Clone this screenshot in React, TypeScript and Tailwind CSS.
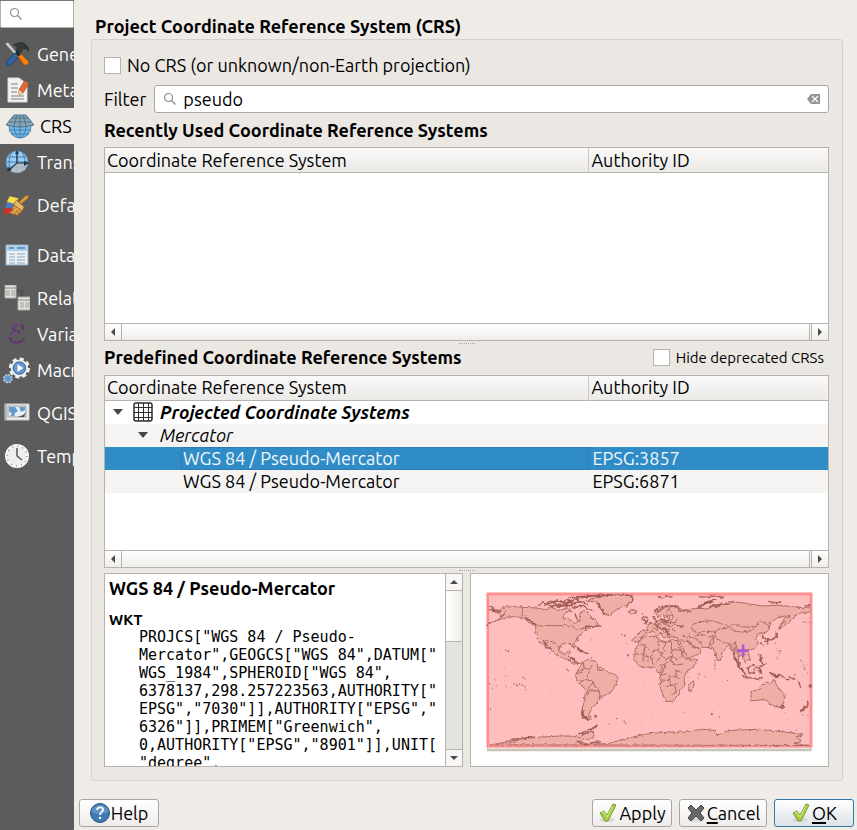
import type { ReactNode } from 'react';

const ToolsIcon = () => (
  <svg viewBox="0 0 26 26" className="size-[26px]">
    <path d="M1 2l3-1 10 12-2 2L2 4z" fill="#c9ccce" stroke="#444" strokeWidth=".6" />
    <path d="M3 20l8-8 4 3-8 9c-3 2-6-1-4-4z" fill="#2e63a5" stroke="#1d3764" strokeWidth=".8" />
    <path d="M10 4c6-4 13-3 15 6-3-3-5-3-7-1l-2 4-4-3 2-4z" fill="#343a3a" stroke="#1d2222" strokeWidth=".7" />
    <path d="M13 14l3-2 9 9-2 3-3 0z" fill="#f68012" stroke="#a94e09" strokeWidth=".8" />
    <path d="M11 12l3-2 3 4-3 1z" fill="#202a35" />
  </svg>
);

const MetadataIcon = () => (
  <svg viewBox="0 0 26 26" className="size-[26px]">
    <path d="M4 1h11l8 6v18H4z" fill="#f2f2f0" stroke="#d9d9d6" />
    <path d="M7 7h7M7 11h7M7 15h6M7 19h13M7 22h13" stroke="#a7a7a7" strokeWidth="1.3" />
    <path d="M21 3l4 3-6 10-4 2 0-5z" fill="#e96832" stroke="#a23d16" strokeWidth=".7" />
    <path d="M15 13l4 3-4 2z" fill="#f7d4a5" />
    <path d="M21 3l5 3" stroke="#5a5f66" strokeWidth="1.5" />
  </svg>
);

const GlobeHatIcon = () => (
  <svg viewBox="0 0 28 26" className="h-[26px] w-7">
    <circle cx="14" cy="14" r="11" fill="#78b8e8" stroke="#3f7fae" strokeWidth=".8" />
    <path d="M14 13v12M8 13c0 5 2 9 5 12M20 13c0 5-2 9-5 12M3 17h22M5 21h18" fill="none" stroke="#3d78a8" strokeWidth=".9" />
    <path d="M8 2h12l8 10q-14 4-28 0z" fill="#87a5b4" stroke="#466c80" strokeWidth=".9" />
    <path d="M11 2L8 13M17 2l3 11M14 2v12M6 5h16M3 9h22" fill="none" stroke="#466c80" strokeWidth=".8" />
  </svg>
);

const TransformIcon = () => (
  <svg viewBox="0 0 26 26" className="size-[26px]">
    <circle cx="13" cy="13" r="11" fill="#9ccdf0" stroke="#4d8cbd" strokeWidth=".8" />
    <path d="M2 13h22M4 8h18M4 18h18M13 2v22M8 3c-4 7-4 13 0 20M18 3c4 7 4 13 0 20" fill="none" stroke="#3d7fb5" strokeWidth="1" />
    <path d="M5 22l8-8 11 0-3 7-7 3z" fill="#b8bcc0" opacity=".85" />
    <path d="M13 3v11l-8 7M13 14h11" fill="none" stroke="#233746" strokeWidth="1.2" />
    <path d="M11 5l2-4 2 4zM20 12l5 2-5 3zM4 18l-1 5 5-2z" fill="#233746" />
  </svg>
);

const BrushIcon = () => (
  <svg viewBox="0 0 28 26" className="h-[26px] w-7">
    <path d="M7 4l9 2-3 7-9-3z" fill="#f6dc4b" />
    <path d="M4 10l9 2-2 5-9-1z" fill="#4b79b8" />
    <path d="M2 16l10 1 3 5-15 0z" fill="#d82c2c" />
    <path d="M24 3l3 0-1 3-7 6-3-2z" fill="#d89b3d" stroke="#89591c" strokeWidth=".8" />
    <path d="M14 8l8 7-2 4-9-6z" fill="#e9ba66" stroke="#89591c" strokeWidth=".7" />
    <path d="M11 13l9 6-5 5-9-3c3-1 4-4 5-8z" fill="#e0a552" stroke="#8f5a1d" strokeWidth=".7" />
    <path d="M12 16l-3 5M15 18l-3 5M17 19l-2 4" stroke="#8f5a1d" strokeWidth=".8" />
  </svg>
);

const TableIcon = () => (
  <svg viewBox="0 0 26 26" className="size-[26px]">
    <rect x="2" y="3" width="22" height="20" fill="#edf1f3" stroke="#83a8c8" />
    <rect x="3" y="4" width="20" height="5" fill="#a9cdeb" />
    <path d="M5 6h5M13 6h8" stroke="#5886b0" strokeWidth="1.4" />
    <path d="M5 12h6M13 12h8M5 15h6M13 15h8M5 18h6M13 18h8M5 21h6M13 21h8" stroke="#8ba6c2" strokeWidth="1.2" />
  </svg>
);

const RelationsIcon = () => (
  <svg viewBox="0 0 26 26" className="size-[26px]">
    <path d="M13 6h5v8" fill="none" stroke="#35485c" strokeWidth="1.2" />
    <path d="M1 0h11v13H1zM14 12h12v13H14z" fill="#e4e4df" stroke="#a9a9a5" />
    <path d="M1 3h11M14 15h12" stroke="#a4a4a0" strokeWidth="1.5" />
    <path d="M2 6h4M7 6h4M2 8h4M7 8h4M2 10h4M7 10h4M16 18h4M21 18h4M16 20h4M21 20h4M16 22h4M21 22h4" stroke="#999" />
  </svg>
);

const EpsilonIcon = () => (
  <svg viewBox="0 0 26 26" className="size-[26px]">
    <path d="M19 7c0-5-10-5-10-1 0 3 3 5 7 5-6 0-10 2-10 6 0 6 10 6 14 1" fill="none" stroke="#60396c" strokeWidth="2.500" strokeLinecap="round" />
    <path d="M8 6c1-4 7-4 9-2M6 16c1-3 4-4 7-5" fill="none" stroke="#9570a0" strokeWidth=".7" />
    <circle cx="19" cy="7" r="2" fill="#60396c" />
  </svg>
);

const GearIcon = () => (
  <svg viewBox="0 0 28 28" className="size-7">
    <circle cx="17" cy="12" r="9" fill="#eeeeec" />
    <circle cx="17" cy="12" r="9" fill="none" stroke="#eeeeec" strokeWidth="4" strokeDasharray="4 3.070" />
    <circle cx="17" cy="12" r="6.500" fill="#6297d2" stroke="#315f97" />
    <path d="M15 8l6 4-6 4z" fill="#fff" />
    <circle cx="5" cy="23" r="4" fill="#6297d2" stroke="#b9cbdc" strokeWidth="2" strokeDasharray="2 1.140" />
  </svg>
);

const ServerIcon = () => (
  <svg viewBox="0 0 26 26" className="size-[26px]">
    <rect x="1" y="4" width="24" height="16" fill="#f0f1ee" stroke="#c7c9c4" />
    <rect x="4" y="6" width="18" height="11" fill="#e8eff4" stroke="#858985" strokeWidth=".8" />
    <path d="M5 7h6l3 4-3 2-1 3-5-5zM15 7h6v3l-4 2zM8 14l3 2H6z" fill="#6399cb" />
    <path d="M22 12l-2 5h-6l5-2z" fill="#46555e" />
    <path d="M2 4v16" stroke="#a3a5a2" strokeWidth="1.500" />
  </svg>
);

const ClockIcon = () => (
  <svg viewBox="0 0 26 26" className="size-[26px]">
    <circle cx="13" cy="13" r="11" fill="#eeeeec" stroke="#fafafa" strokeWidth="2" />
    <circle cx="13" cy="13" r="10" fill="none" stroke="#6e8fb8" strokeWidth="1.500" strokeDasharray="1 4.240" />
    <path d="M13 5v8l5 4" fill="none" stroke="#555" strokeWidth="1.500" />
  </svg>
);

const SearchIcon = () => (
  <svg viewBox="0 0 14 14" className="size-[14px] shrink-0" fill="none" stroke="#8e8e8e">
    <circle cx="5.500" cy="5.500" r="4" strokeWidth="1.200" />
    <path d="M8.500 8.500l4 4" strokeWidth="1.500" />
  </svg>
);

type NavItem = { label: string; icon: ReactNode; height: string; active?: boolean };

const navItems: NavItem[] = [
  { label: 'General', icon: <ToolsIcon />, height: 'h-9' },
  { label: 'Metadata', icon: <MetadataIcon />, height: 'h-9' },
  { label: 'CRS', icon: <GlobeHatIcon />, height: 'h-9', active: true },
  { label: 'Transformations', icon: <TransformIcon />, height: 'h-9' },
  { label: 'Default Styles', icon: <BrushIcon />, height: 'h-[50px]' },
  { label: 'Data Sources', icon: <TableIcon />, height: 'h-[50px]' },
  { label: 'Relations', icon: <RelationsIcon />, height: 'h-9' },
  { label: 'Variables', icon: <EpsilonIcon />, height: 'h-9' },
  { label: 'Macros', icon: <GearIcon />, height: 'h-9' },
  { label: 'QGIS Server', icon: <ServerIcon />, height: 'h-[50px]' },
  { label: 'Temporal', icon: <ClockIcon />, height: 'h-9' },
];

function Sidebar() {
  return (
    <aside className="w-[74px] shrink-0 overflow-hidden bg-[#5c5c5c]">
      <label className="mb-2 flex h-7 items-center rounded-[2px] border border-[#b4b0ac] border-t-[#777] bg-white pl-2">
        <SearchIcon />
        <input type="search" aria-label="Search settings" className="w-full min-w-0 bg-transparent outline-none" />
      </label>
      <nav>
        {navItems.map((item) => (
          <a
            key={item.label}
            href="#"
            className={
              item.active
                ? `flex items-center gap-[6px] bg-[#efebe7] pl-[6px] text-black ${item.height}`
                : `flex items-center gap-[7px] pl-[3px] text-white ${item.height}`
            }
          >
            <span className={item.active ? 'flex w-7 shrink-0 justify-center' : 'flex w-[27px] shrink-0 justify-center'}>{item.icon}</span>
            <span className="min-w-0 overflow-hidden whitespace-nowrap">{item.label}</span>
          </a>
        ))}
      </nav>
    </aside>
  );
}

function Arrow({ dir }: { dir: 'left' | 'right' | 'up' | 'down' }) {
  const paths = { left: 'M7 1v8L3 5z', right: 'M3 1v8l4-4z', up: 'M1 7h8L5 3z', down: 'M1 3h8L5 7z' };
  return (
    <svg viewBox="0 0 10 10" className="size-[10px]">
      <path d={paths[dir]} fill="#4b4b4b" />
    </svg>
  );
}

function HorizontalScrollbar() {
  return (
    <div className="flex h-[17px] shrink-0 border-t border-[#b6b2ae] bg-linear-to-b from-white to-[#efedea]">
      <button aria-label="Scroll left" className="flex w-[17px] items-center justify-center border-r border-[#b6b2ae]">
        <Arrow dir="left" />
      </button>
      <div className="mr-px flex-1 border-r border-[#b6b2ae]" />
      <button aria-label="Scroll right" className="flex w-[17px] items-center justify-center border-l border-[#b6b2ae]">
        <Arrow dir="right" />
      </button>
    </div>
  );
}

function CrsTable({ label, children }: { label: string; children?: ReactNode }) {
  return (
    <div className="flex min-h-[140px] flex-1 basis-0">
      <div className="flex min-w-0 flex-1 flex-col border border-[#b6b2ae] bg-white">
        <div className="flex-1">
          <table aria-label={label} className="w-full table-fixed border-separate border-spacing-0 text-left">
            <thead>
              <tr className="bg-linear-to-b from-[#fbf9f8] to-[#ebe9e6]">
                <th className="h-[25px] w-[67%] border-r border-b border-[#b6b2ae] border-r-[#cbc8c5] px-[2px] py-0 font-normal">
                  Coordinate Reference System
                </th>
                <th className="h-[25px] border-b border-[#b6b2ae] px-[2px] py-0 font-normal">Authority ID</th>
              </tr>
            </thead>
            <tbody>{children}</tbody>
          </table>
        </div>
        <HorizontalScrollbar />
      </div>
    </div>
  );
}

const Caret = () => (
  <svg viewBox="0 0 10 6" className="h-[6px] w-[10px] shrink-0">
    <path d="M0 0h10L5 6z" fill="#464646" />
  </svg>
);

const GridIcon = () => (
  <svg viewBox="0 0 20 20" className="size-5 shrink-0" fill="none" stroke="#2d2d2d">
    <rect x="1" y="1" width="18" height="18" rx="2" fill="#fff" strokeWidth="1.500" />
    <path d="M5.500 1v18M10.500 1v18M15.500 1v18M1 5.500h18M1 10.500h18M1 15.500h18" strokeWidth="1" />
  </svg>
);

const Grip = () => <div className="w-4 self-center border-t border-dotted border-[#aaa6a2]" />;

const specks: [number, number, number][] = [
  [58, 198, 2], [76, 225, 2], [92, 210, 4], [100, 214, 5], [88, 262, 2], [92, 288, 3], [145, 293, 4], [150, 297, 3],
  [60, 300, 3], [64, 318, 3], [52, 325, 3], [44, 312, 4], [88, 303, 2], [94, 320, 3], [118, 312, 4], [126, 316, 5],
  [134, 312, 4], [142, 316, 4], [150, 320, 4], [152, 330, 3], [130, 330, 2], [108, 322, 2], [228, 343, 2], [46, 388, 4],
  [225, 218, 3], [276, 268, 4], [280, 272, 4], [362, 409, 8], [425, 416, 4], [402, 432, 3], [448, 424, 4], [452, 430, 4],
  [349, 180, 3], [441, 164, 4], [450, 167, 5], [457, 192, 3], [459, 226, 6], [438, 268, 2], [491, 290, 2], [466, 352, 2],
  [495, 378, 2], [508, 316, 2], [503, 102, 4], [472, 148, 2], [350, 234, 4], [358, 243, 3], [443, 245, 2],
  [626, 397, 3], [664, 396, 2], [711, 403, 6], [734, 411, 4], [673, 282, 4], [670, 295, 3], [690, 290, 3], [720, 242, 3],
  [720, 255, 3], [723, 268, 2], [758, 302, 3], [672, 322, 2], [732, 374, 2], [640, 292, 3], [892, 180, 3], [902, 190, 3],
  [917, 213, 4], [910, 236, 3], [875, 250, 3], [935, 248, 2], [968, 250, 2], [978, 242, 3], [990, 268, 4], [998, 280, 3],
  [960, 285, 4], [974, 310, 5], [1007, 318, 10], [1000, 406, 3], [940, 420, 2], [965, 450, 3], [985, 405, 3], [930, 398, 2],
  [955, 270, 2], [999, 255, 2], [533, 416, 2], [498, 435, 2],
];

const countryLines =
  'M142 82V108M190 137H292L303 150 330 145 345 138M210 182L235 186 250 198 262 202M325 246L328 265 345 268 352 255M345 268L337 298 355 308 370 328 375 345M337 298L315 305M355 308L340 325 337 348 345 330 372 335M375 345L372 362M305 275L322 278 325 262M370 252L368 270 385 272 387 264' +
  'M480 223H508L510 196 528 216 550 210 552 182 570 188 590 184V210H622M496 195L510 198M508 228L530 232 540 212M550 210L560 226 545 248 535 255M570 188L568 215 560 226 572 238 590 228 592 210M592 230L608 238 622 228 636 236M590 228L588 247 604 256 625 252M555 258L570 252 588 247M560 258L558 284 575 282 587 292 604 290 602 270M558 284L556 300 582 302 590 318 610 310M575 320L592 315 605 322M602 270L620 280M587 292L583 302M604 290L618 296M570 255L566 272 552 280M600 318L604 335 590 345M505 228V245M518 230L520 245M530 232L534 250M622 228L620 212 636 222' +
  'M540 125L555 132 572 130 585 140 600 135 622 143M545 142L560 145 575 150 592 148M570 115L568 130M585 105L582 128 600 128 610 112M552 132L548 150M575 98L582 85 590 100M562 150L570 160M532 142L545 148M596 145L600 156M565 115L555 125' +
  'M650 135L676 125 715 122 736 130 760 137 755 146 735 146 720 156 690 154 670 160 652 150ZM760 138L780 132 800 140 832 142 844 137 830 152 800 157 775 152ZM844 137L858 124 878 132 885 147M720 156L722 172 742 186 775 194 780 186 790 210M715 168L716 190 696 204M660 168L685 164 702 172 716 168M640 158L645 176 660 174 676 184 682 198M622 168L640 172M616 180L635 183 650 194M780 200L788 222 800 215 812 224M722 172L710 178 700 196M770 194L768 208';

const coast =
  'M78 86l20-8 44 4 44 2 20 4 24-5 28 8 20-9 14 12-20 3-8 16 22 5 15 12 14-10 4-24 14-2 14 14 16 14 8 14-30 9-18 12-13 12-2 12-11 9-2 16-10-15-24 1-8 12 3 15 16 3 8-9 6 2-7 14 14 5 4 12 22 4-20 2-21-12-22-9-22-14-14-22-14-11 10 22-17-18-14-16-3-20 1-12-22-14-18-14-30-2-24 3-34 13-22 8 36-14 12-10-10-10Z' +
  'M334 62l34-12 50-6 58 3-6 22-28 12-24 12-15 15-15-7-9-20-17-15Z' +
  'M325 245l17-8 18 8 13 15 20 12 37 17-7 26-13 20-23 12-14 15-13 14-11 14-9 16 10 14-28-4-1-26 8-30 1-34-17-14-11-20 7-20Z' +
  'M495 175l20-5 33-2 5 12 18 5 20-5 24 4 6 12 14 30 10 15 24-5-15 26-20 14-7 20 4 20-16 15-4 16-18 17-20 1-10-24-8-24 4-26-12-16-9-14-30 2-16-6-14-20v-24l12-20Z' +
  'M644 312l14-10-1 18-11 16-5-10Z' +
  'M500 152h20l-4-11 16-10 12-6 16-7 16 4 16-6 2-10-16-2-8 10-8-12-12 10-8-14 14-14 26-8 24 4 14 8 20 2 22-5 38 1 18-11 34-5 32-4 38 5 38 7 52-2 48 5 46 3v12l-36 6-22 18-24 22-9 6 2-18 16-16 11-8-35 7-20 14-8 24-10 10-10-2-14 7-5 10 10 14-14 16-20 10 8 18-13 16-7-14-10-12-5 16 6 20 10 15-15-12-9-28-8-32-14-8-18 20-6 27-10-4-12-34-28-2-22 2-12-10-16-14 14 18 26 10 2 11-46 20-15-27-10-26-2-16-40 3-10-14-10 10-12-14-18 6-10 8-10 13-14 5-12-4Z' +
  'M830 336l26-12 18-18 14 6 8-14 12 22 24 26-5 22-14 14-26-8-14-17-26 4-20 2Z' +
  'M45 495l43-7 20-10 60-4 90-6 60 2 18-12 22-2-3 18-44 10 30 10 60-3 50-14 60-14 50-5 65-2 60-8 38 5 2 12 40-13 90-4 70 8 58 8-20 9 20 10-25 8 45 6Z';

const islands =
  'M190 76l14-8 8 4 14-8 12 6 10-8 16 6 10-8 12 4 14-8 20 10 18 8M205 78l12-6 14 8 12-8 14 8 14-6 16 4 14-10 16-2M212 72l28 8 26-6 20-12 24-8 40-5 60-4M225 66l28-4 20 8 24-4M240 74l30 4 24-2M290 86l12-8 13 2 10-4 16 12 12 4M300 100l4 12 6 10M330 144l12-6 13 4 8-6 16 4' +
  'M280 54l30-4 30-2 60-4 64 2M468 46l4 10-6 12-12 12M365 66l8 12 8 14 8 12M372 76l10 12' +
  'M38 78l14 6 8 6 14 2M40 90l16 0 10 8 10-4M76 112l10-8 6-8M150 110l10 10 10 4 10 8M156 112l16 16 14 8M205 184l8 8 4 10 8 4M210 190l10 14M300 196l8 4 4 10 12 2 8 8 10-2M304 204l12 8 16 6M285 236l8 2 8 8M290 232l10 8' +
  'M322 384l-2 16 6 12 14 6M324 392l2 18 14 4M328 405l12 12M310 462l18-5 10-6 12-4 18-12M316 464l20-4 20-4M345 452l22-14M305 484l20 10 20 0 10-6 24-2M140 474l40-2' +
  'M500 118l6-8 8 2 4 12-10 8M504 114l10 12M518 133l10-3M533 108l8 8 6 10M535 96l8-6 10-10 12-2M556 116l16 8 14-4M562 142l10 6 6 12 12 4M568 144l14 12M572 150l8 18M548 98l10-8 14-10 36-2M598 135l26 6M556 130l12-6 18 8M540 130l12 12 10 4M576 110l14 8' +
  'M550 50l12 4 14-6 18 4M675 50l20 2 12-4 28 2 14 6M670 80l14-10 16-6 25-4M672 84l22-14 20-4M705 84l10-10 14 4 18-8 16 2M712 78l14 4 14-10M600 76l10 8 6 10 14-2 20 4M880 64l20 4 20-2M990 78l18-1' +
  'M768 206l10 14 0 14 10 16 8 14M774 216l8 20 10 16M782 246l12 12 8 12 12 16M790 256l14 16 10 14M802 286l14 8 18 0 12 4 18-4M820 266l10-12 14 8-8 18-14-2ZM848 262l12-4-10 12 10 10-4-14M852 224l10 8-4 14 10 6-8 8M856 228l4 24M880 278l14 2 10 8 14-2 14 10 12 4M884 282l18 8 14 0M942 290l20 10M970 300l4 12 4 12M905 155l-1 12-8 10-16 6-12 2M904 150l4 18-14 10M862 162l4 12 12 4 2 14M856 188l10 10M998 362l2 14-10 10-14 10M994 376l-16 16M916 378l10-2-4 8ZM940 116l8-12M912 146l6-12 12-10';

function WorldMap() {
  return (
    <svg viewBox="0 0 1048 540" className="w-full max-w-[400px]" role="img" aria-label="Extent of the selected CRS">
      <filter id="rough">
        <feTurbulence type="fractalNoise" baseFrequency=".09" numOctaves="2" seed="4" />
        <feDisplacementMap in="SourceGraphic" scale="11" xChannelSelector="R" yChannelSelector="G" />
      </filter>
      <path d="M36 500H1011V514H36Z" fill="#c9c4ba" />
      <path d="M38 503H1003V507H38Z" fill="#f6ead9" />
      <rect x="34" y="37" width="980" height="467" rx="3" fill="#ffacac" />
      <rect x="39" y="43" width="969" height="455" fill="#ffbebe" stroke="#ff8b8b" strokeWidth="6" />
      <g filter="url(#rough)" fill="none" stroke="#ac6c64" strokeWidth="3" strokeLinejoin="round">
        <path d={coast} fill="#efaea6" />
        <path d={countryLines} />
        <path d={islands} stroke="#a35d56" strokeWidth="4" />
        <path d="M461 92l15-2 12 4-8 5-17-1ZM90 486l25-8 30 0M100 490l30-10" strokeWidth="4" />
        <path d="M720 240v34M905 205q16 16 0 30M980 240l12 24M985 127h25" strokeDasharray="3 5" />
      </g>
      {specks.map(([x, y, size]) => (
        <rect key={`${x}-${y}`} x={x - size / 2} y={y - size / 2} width={size} height={size} fill="#ad6660" />
      ))}
      <path d="M805 194v36M787 212h36" stroke="#b457d3" strokeWidth="8" />
    </svg>
  );
}

const CheckIcon = () => (
  <svg viewBox="0 0 20 20" className="size-5 shrink-0">
    <ellipse cx="9" cy="17" rx="8" ry="2" fill="#d8d7d5" />
    <path d="M2 10l4-2 3 4 6-11 3 1-8 16H7z" fill="#a5cf3d" stroke="#668b28" strokeWidth=".8" />
    <path d="M4 10l2-1 3 5 6-11" fill="none" stroke="#dcef8b" strokeWidth="1" />
  </svg>
);

const CrossIcon = () => (
  <svg viewBox="0 0 20 20" className="size-5 shrink-0">
    <ellipse cx="10" cy="17" rx="8" ry="2" fill="#d8d7d5" />
    <path d="M5 2l5 5 5-5 3 3-4 5 4 5-3 3-5-5-5 5-3-3 4-5-4-5z" fill="#666a68" stroke="#434644" strokeWidth="1" />
  </svg>
);

const HelpIcon = () => (
  <svg viewBox="0 0 20 20" className="size-5 shrink-0">
    <circle cx="10" cy="10" r="9.500" fill="#3f7ab4" stroke="#285985" />
    <path d="M2 9a8 7 0 0 1 16 0q-8 4-16 0z" fill="#78a6d0" opacity=".6" />
    <path d="M7 7c0-4 7-3 6 0-.5 2-3 2-3 5" fill="none" stroke="#fff" strokeWidth="1.800" />
    <circle cx="10" cy="15" r="1.200" fill="#fff" />
  </svg>
);

const buttonClass =
  'flex h-7 items-center justify-center gap-px rounded-[3px] border border-[#aaa6a2] bg-linear-to-b from-white to-[#efedeb]';

const wktLines = [
  'PROJCS["WGS 84 / Pseudo-',
  'Mercator",GEOGCS["WGS 84",DATUM["',
  'WGS_1984",SPHEROID["WGS 84",',
  '6378137,298.257223563,AUTHORITY["',
  'EPSG","7030"]],AUTHORITY["EPSG","',
  '6326"]],PRIMEM["Greenwich",',
  '0,AUTHORITY["EPSG","8901"]],UNIT[',
  '"degree",',
];

const checkboxClass = 'size-[17px] shrink-0 appearance-none border border-[#b6b2ae] bg-white checked:bg-[#308cc6]';

export default function App() {
  return (
    <div className="flex min-h-screen bg-[#efebe7] font-['Ubuntu','Noto_Sans',sans-serif] text-[18px] leading-[23px] text-black">
      <Sidebar />
      <main className="flex min-w-0 flex-1 flex-col">
        <h1 className="mt-[15px] mb-px pl-[21px] font-bold">Project Coordinate Reference System (CRS)</h1>
        <section className="mr-[14px] ml-[17px] flex flex-1 flex-col rounded-[3px] border border-[#d5d1cd] bg-[#ebe7e3] pt-[14px] pr-[13px] pb-[13px] pl-3">
          <label className="flex items-center gap-[6px]">
            <input type="checkbox" className={checkboxClass} />
            No CRS (or unknown/non-Earth projection)
          </label>
          <div className="mt-2 flex items-center gap-2">
            <label htmlFor="filter">Filter</label>
            <div className="flex h-7 flex-1 items-center gap-[6px] rounded-[3px] border border-[#aaa6a2] bg-white px-2">
              <SearchIcon />
              <input id="filter" type="text" defaultValue="pseudo" className="min-w-0 flex-1 bg-transparent outline-none" />
              <button aria-label="Clear filter">
                <svg viewBox="0 0 13 10" className="h-[10px] w-[13px]">
                  <path d="M4 0h9v10H4L0 5z" fill="#969492" />
                  <path d="M5 2l6 6M11 2l-6 6" stroke="#fff" strokeWidth="1.200" />
                </svg>
              </button>
            </div>
          </div>
          <h2 className="mt-[6px] mb-[5px] font-bold">Recently Used Coordinate Reference Systems</h2>
          <CrsTable label="Recently used coordinate reference systems" />
          <div className="mt-[2px] flex flex-col">
            <Grip />
          </div>
          <div className="mt-[2px] mb-[6px] flex items-center justify-between">
            <h2 className="font-bold">Predefined Coordinate Reference Systems</h2>
            <label className="flex items-center gap-[6px] pr-[5px] text-[15px]">
              <input type="checkbox" className={checkboxClass} />
              Hide deprecated CRSs
            </label>
          </div>
          <CrsTable label="Predefined coordinate reference systems">
            <tr className="h-[23px]">
              <td colSpan={2} className="p-0">
                <div className="flex items-center pl-2 font-bold italic">
                  <Caret />
                  <span className="mr-[7px] ml-[10px]"><GridIcon /></span>
                  Projected Coordinate Systems
                </div>
              </td>
            </tr>
            <tr className="h-[23px] bg-[#f5f4f3]">
              <td colSpan={2} className="p-0">
                <div className="flex items-center gap-3 pl-[33px] italic">
                  <Caret />
                  Mercator
                </div>
              </td>
            </tr>
            <tr className="h-[23px] bg-[#308cc6] text-[#f3f7fa]">
              <td className="p-0 pl-[76px]">
                <div className="border border-[#2d7fb3] pl-px leading-[21px]">WGS 84 / Pseudo-Mercator</div>
              </td>
              <td className="p-0 pl-[3px]">EPSG:3857</td>
            </tr>
            <tr className="h-[23px] bg-[#f5f4f3]">
              <td className="p-0 pl-[78px]">WGS 84 / Pseudo-Mercator</td>
              <td className="p-0 pl-[3px]">EPSG:6871</td>
            </tr>
          </CrsTable>
          <div className="my-[2px] flex flex-col">
            <Grip />
          </div>
          <div className="grid min-h-[140px] flex-1 basis-0 grid-cols-2 gap-[7px]">
            <div className="flex min-w-0 border border-[#b6b2ae] bg-white">
              <div className="h-0 min-h-full min-w-0 flex-1 overflow-hidden pt-[3px] pl-1">
                <h3 className="font-bold">WGS 84 / Pseudo-Mercator</h3>
                <h4 className="mt-2 text-[15px] font-bold">WKT</h4>
                <pre className="-mt-[3px] pl-[30px] font-['DejaVu_Sans_Mono',monospace] text-[15px] leading-[18px]">{wktLines.join('\n')}</pre>
              </div>
              <div className="flex w-[17px] shrink-0 flex-col border-l border-[#b6b2ae] bg-[#e3e3e0]">
                <button aria-label="Scroll up" className="flex h-[17px] items-center justify-center border-b border-[#b6b2ae] bg-[#f8f7f6]">
                  <Arrow dir="up" />
                </button>
                <div className="h-[51px] border-b border-[#b6b2ae] bg-linear-to-r from-white to-[#efedea]" />
                <div className="flex-1" />
                <button aria-label="Scroll down" className="flex h-[17px] items-center justify-center border-t border-[#b6b2ae] bg-[#f8f7f6]">
                  <Arrow dir="down" />
                </button>
              </div>
            </div>
            <div className="flex min-w-0 items-center justify-center border border-[#b6b2ae] bg-white px-1">
              <WorldMap />
            </div>
          </div>
        </section>
        <footer className="mt-[18px] mb-[3px] flex gap-[7px] pr-[3px] pl-[5px]">
          <button className={`${buttonClass} mr-auto w-20`}>
            <HelpIcon />
            Help
          </button>
          <button className={`${buttonClass} w-20`}>
            <CheckIcon />
            Apply
          </button>
          <button className={`${buttonClass} w-[88px]`}>
            <CrossIcon />
            <span><span className="underline decoration-2 underline-offset-2">C</span>ancel</span>
          </button>
          <button className="flex h-7 w-20 items-center justify-center gap-px rounded-[3px] border border-[#2f78aa] bg-linear-to-b from-white to-[#dce2e6]">
            <CheckIcon />
            <span><span className="underline decoration-2 underline-offset-2">O</span>K</span>
          </button>
        </footer>
      </main>
    </div>
  );
}
